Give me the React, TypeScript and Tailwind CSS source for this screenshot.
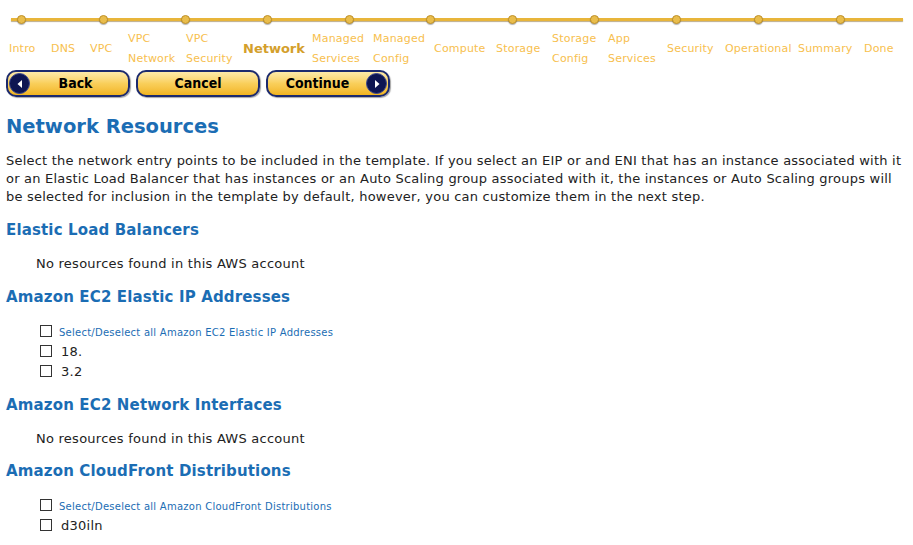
import React from "react";

const steps: { label: string[]; w: number; current?: boolean }[] = [
  { label: ["Intro"], w: 42 },
  { label: ["DNS"], w: 39 },
  { label: ["VPC"], w: 38 },
  { label: ["VPC", "Network"], w: 58 },
  { label: ["VPC", "Security"], w: 57 },
  { label: ["Network"], w: 69, current: true },
  { label: ["Managed", "Services"], w: 61 },
  { label: ["Managed", "Config"], w: 61 },
  { label: ["Compute"], w: 62 },
  { label: ["Storage"], w: 56 },
  { label: ["Storage", "Config"], w: 56 },
  { label: ["App", "Services"], w: 59 },
  { label: ["Security"], w: 58 },
  { label: ["Operational"], w: 73 },
  { label: ["Summary"], w: 66 },
  { label: ["Done"], w: 45 },
];

function Arrow({ dir }: { dir: "left" | "right" }) {
  return (
    <span className="w-[21px] h-[21px] rounded-full bg-[#0d1552] flex items-center justify-center shrink-0 border border-[#3a4690]">
      <svg width="8" height="10" viewBox="0 0 8 10">
        {dir === "left" ? <path d="M6 1 L1.5 5 L6 9 Z" fill="#fff" /> : <path d="M2 1 L6.5 5 L2 9 Z" fill="#fff" />}
      </svg>
    </span>
  );
}

function NavButton({ children, left, right }: { children: React.ReactNode; left?: boolean; right?: boolean }) {
  return (
    <button className="w-[124px] h-[27px] rounded-[10px] border-2 border-[#1c2a6e] bg-gradient-to-b from-[#fdeaa8] via-[#f9cf5a] to-[#f2b51c] flex items-center px-[1px] text-[14px] font-bold text-black font-['DejaVu_Sans_Condensed','DejaVu_Sans',sans-serif] shadow-[1px_1px_1px_rgba(0,0,0,0.35)]">
      {left && <Arrow dir="left" />}
      <span className={left ? "flex-1 text-center pr-[6px]" : "flex-1 text-center"}>{children}</span>
      {right && <Arrow dir="right" />}
    </button>
  );
}

function Check() {
  return <span className="inline-block w-[12px] h-[12px] border border-[#333] bg-white shrink-0" />;
}

function Heading({ children }: { children: React.ReactNode }) {
  return <h3 className="text-[15px] font-bold text-[#1b6db4] leading-[20px] tracking-[0.15px]">{children}</h3>;
}

function Empty() {
  return <p className="pl-[30px] text-[13px] text-[#222] leading-[18px] tracking-[0.25px]">No resources found in this AWS account</p>;
}

function CheckList({ all, items }: { all: string; items: string[] }) {
  return (
    <div className="pl-[34px] flex flex-col">
      <div className="flex items-end gap-[7px] h-[21px]">
        <Check />
        <span className="text-[10px] text-[#1b6db4] leading-[12px] tracking-[0.25px] translate-y-[2px]">{all}</span>
      </div>
      {items.map((t) => (
        <div key={t} className="flex items-end gap-[9px] h-[20px]">
          <Check />
          <span className="text-[13px] leading-[16px] text-[#222] tracking-[0.25px] translate-y-[3px]">{t}</span>
        </div>
      ))}
    </div>
  );
}

export default function App() {
  return (
    <div className="w-[913px] h-[545px] overflow-hidden bg-white font-['DejaVu_Sans','Verdana',sans-serif]">
      {/* progress track */}
      <div className="pt-[18px] pl-[11px] pr-[10px]">
        <div className="h-[3px] bg-[#e8b53a] shadow-[0_1px_1px_rgba(120,90,20,0.5)] flex items-center pl-[6px] gap-[72.9px]">
          {Array.from({ length: 11 }).map((_, i) => (
            <span key={i} className="w-[9px] h-[9px] rounded-full bg-[#e9bd4c] border border-[#c0922a] shrink-0 shadow-[0_1px_1px_rgba(0,0,0,0.3)]" />
          ))}
        </div>
      </div>

      {/* step labels */}
      <div className="flex pl-[9px] mt-[8px] h-[40px] items-center">
        {steps.map((s) => (
          <div key={s.label.join(" ")} style={{ width: s.w }} className="shrink-0">
            {s.current ? (
              <span className="text-[13px] font-bold text-[#d49f2c] leading-[16px] block">{s.label[0]}</span>
            ) : (
              s.label.map((l) => (
                <div key={l} className="text-[11px] leading-[20px] text-[#f7c04e] tracking-[0.2px]">
                  {l}
                </div>
              ))
            )}
          </div>
        ))}
      </div>

      {/* buttons */}
      <div className="flex gap-[6px] pl-[6px] mt-[1px]">
        <NavButton left>Back</NavButton>
        <NavButton>Cancel</NavButton>
        <NavButton right>Continue</NavButton>
      </div>

      <div className="pl-[6px] pr-[4px]">
        <h1 className="text-[19.5px] font-bold text-[#1b6db4] mt-[18px] leading-[24px]">Network Resources</h1>
        <p className="text-[13px] text-[#222] leading-[18px] mt-[13px] tracking-[0.22px]">
          Select the network entry points to be included in the template. If you select an EIP or and ENI that has an instance associated with it or an Elastic Load Balancer that has instances or an Auto Scaling group associated with it, the instances or Auto Scaling groups will be selected for inclusion in the template by default, however, you can customize them in the next step.
        </p>

        <div className="mt-[14px]"><Heading>Elastic Load Balancers</Heading></div>
        <div className="mt-[15px]"><Empty /></div>

        <div className="mt-[14px]"><Heading>Amazon EC2 Elastic IP Addresses</Heading></div>
        <div className="mt-[9px]">
          <CheckList all="Select/Deselect all Amazon EC2 Elastic IP Addresses" items={["18.", "3.2"]} />
        </div>

        <div className="mt-[18px]"><Heading>Amazon EC2 Network Interfaces</Heading></div>
        <div className="mt-[15px]"><Empty /></div>

        <div className="mt-[13px]"><Heading>Amazon CloudFront Distributions</Heading></div>
        <div className="mt-[9px]">
          <CheckList all="Select/Deselect all Amazon CloudFront Distributions" items={["d30iln"]} />
        </div>
      </div>
    </div>
  );
}
